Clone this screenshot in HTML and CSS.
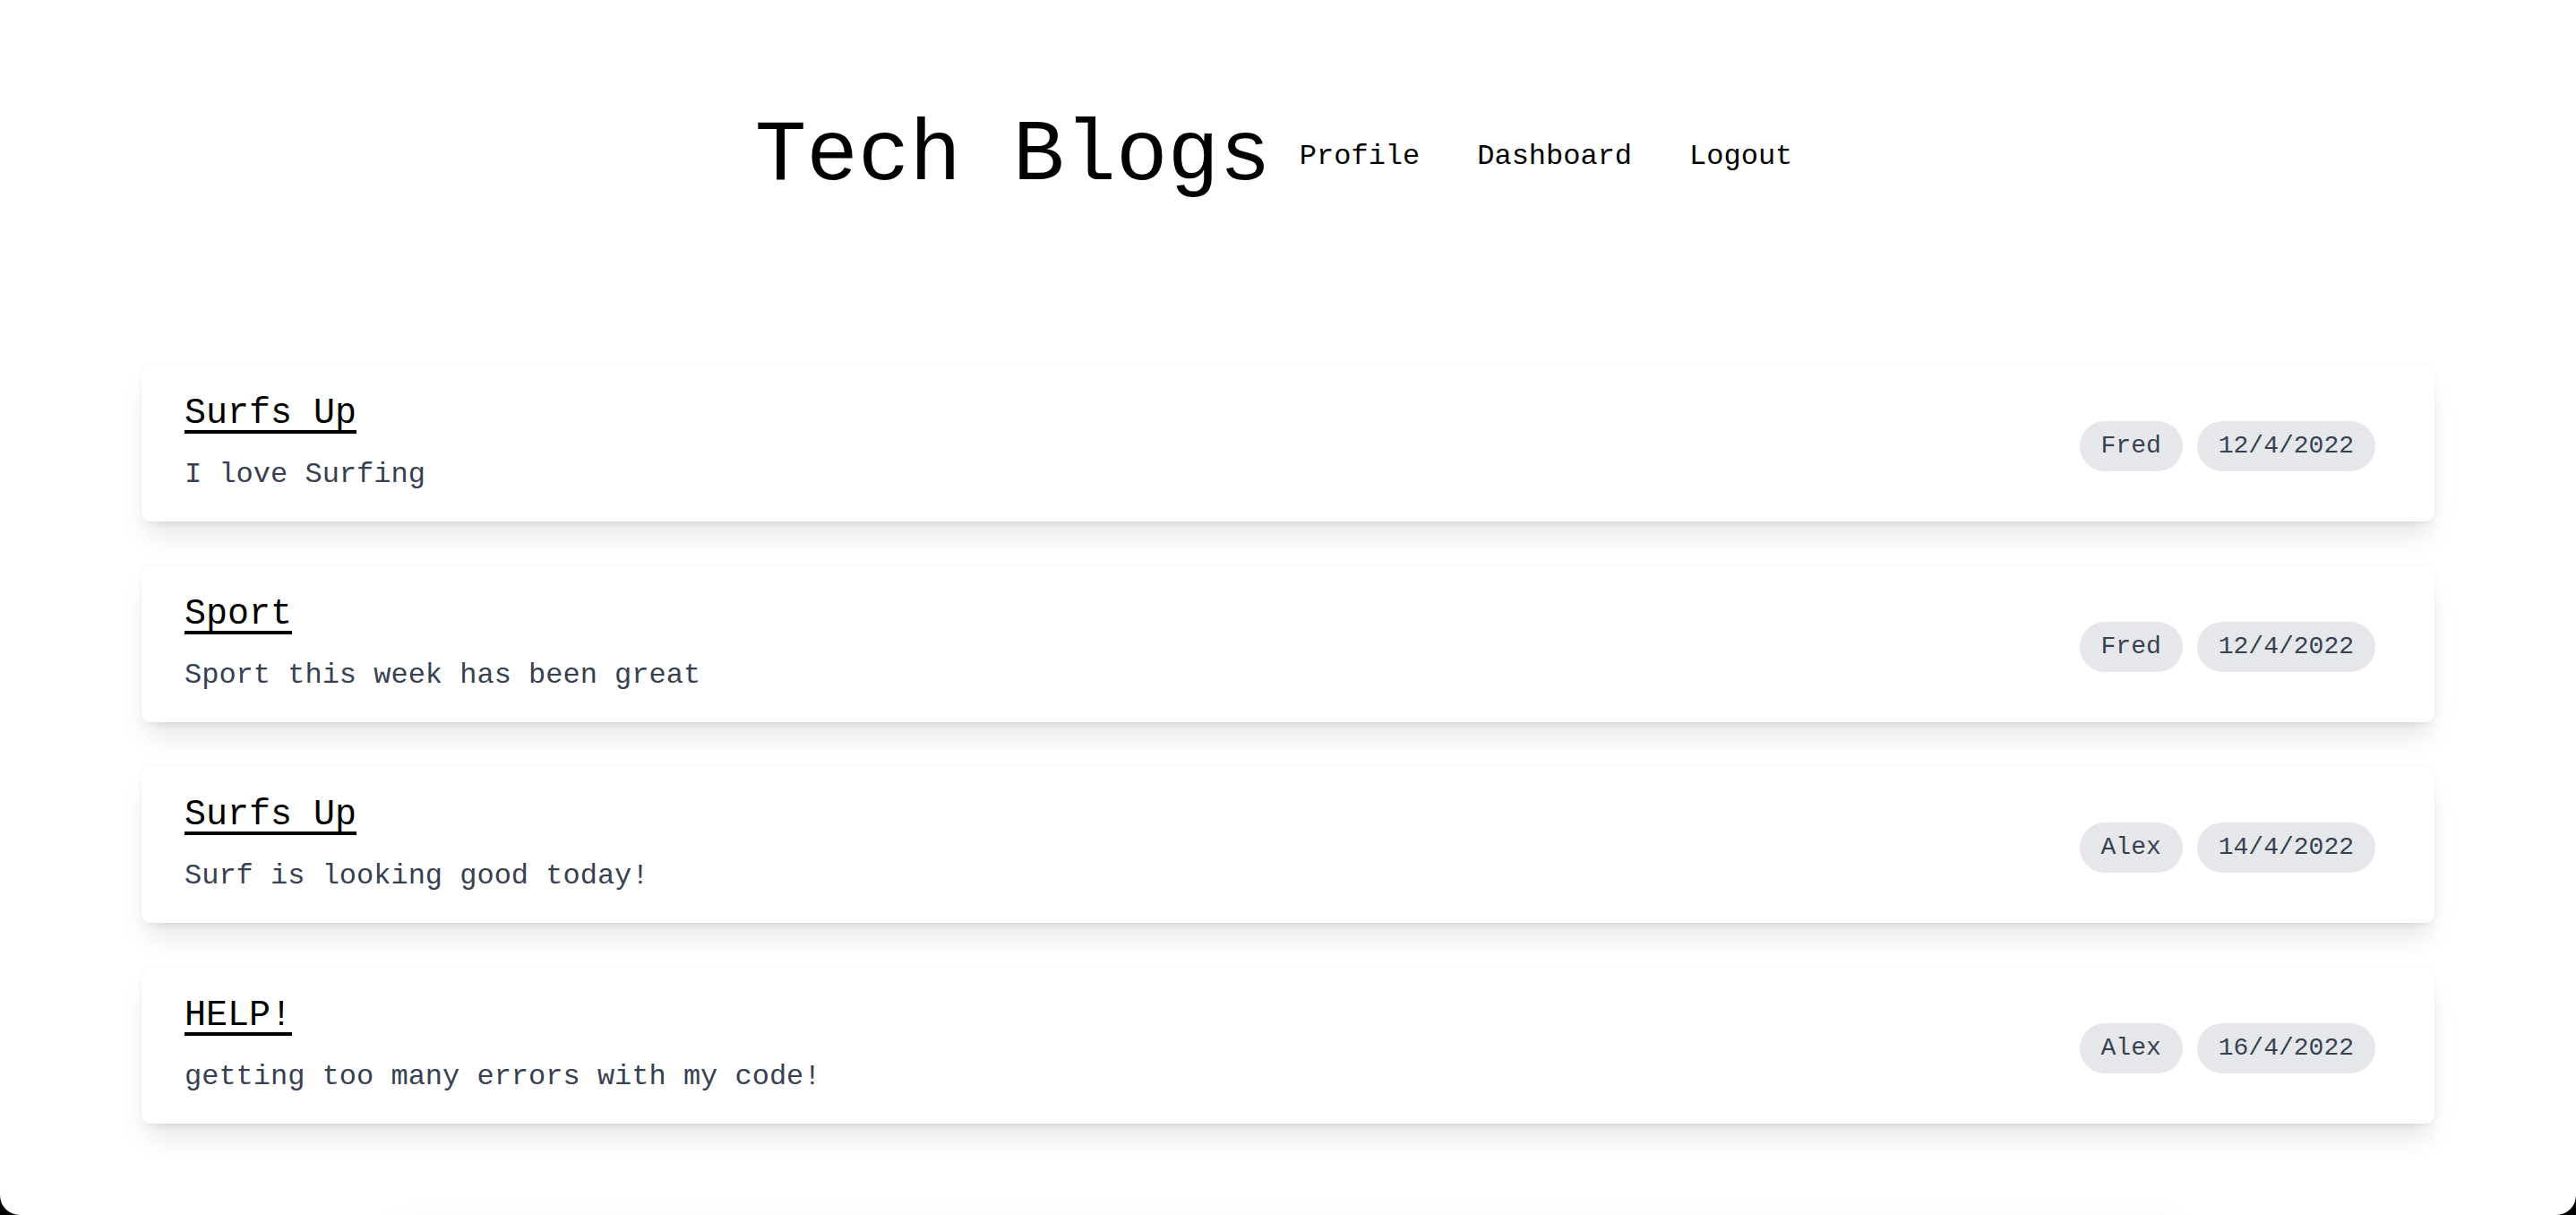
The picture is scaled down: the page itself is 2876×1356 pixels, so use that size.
FILE: index.html
```html
<!DOCTYPE html>
<html lang="en">
<head>
<meta charset="utf-8">
<title>Tech Blogs</title>
<link rel="stylesheet" href="styles.css">
</head>
<body>
<div class="page">
  <header class="site-header">
    <h1 class="brand">Tech Blogs</h1>
    <nav class="nav">
      <a class="nav-link" href="#">Profile</a>
      <a class="nav-link" href="#">Dashboard</a>
      <a class="nav-link" href="#">Logout</a>
    </nav>
  </header>
  <main class="posts">
    <article class="post">
      <div class="post-body">
        <a class="post-title" href="#">Surfs Up</a>
        <p class="post-text">I love Surfing</p>
      </div>
      <div class="post-meta">
        <span class="pill">Fred</span>
        <span class="pill">12/4/2022</span>
      </div>
    </article>
    <article class="post">
      <div class="post-body">
        <a class="post-title" href="#">Sport</a>
        <p class="post-text">Sport this week has been great</p>
      </div>
      <div class="post-meta">
        <span class="pill">Fred</span>
        <span class="pill">12/4/2022</span>
      </div>
    </article>
    <article class="post">
      <div class="post-body">
        <a class="post-title" href="#">Surfs Up</a>
        <p class="post-text">Surf is looking good today!</p>
      </div>
      <div class="post-meta">
        <span class="pill">Alex</span>
        <span class="pill">14/4/2022</span>
      </div>
    </article>
    <article class="post">
      <div class="post-body">
        <a class="post-title" href="#">HELP!</a>
        <p class="post-text">getting too many errors with my code!</p>
      </div>
      <div class="post-meta">
        <span class="pill">Alex</span>
        <span class="pill">16/4/2022</span>
      </div>
    </article>
  </main>
  <footer class="site-footer"></footer>
</div>
</body>
</html>
```
FILE: styles.css
```css
html {
  background: #000;
}
body {
  margin: 0;
  font-family: "Courier New", Courier, "Nimbus Mono PS", "FreeMono", "Liberation Mono", monospace;
  color: #000;
}
.page {
  height: 100vh;
  overflow: hidden;
  background: #fff;
  border-radius: 0 0 22px 22px;
}
.site-header {
  display: flex;
  justify-content: center;
  align-items: center;
  padding: 127px 0 0;
}
.brand {
  margin: 0;
  font-size: 96px;
  line-height: 96px;
  font-weight: 400;
}
.nav {
  display: flex;
}
.nav-link {
  margin: 0 32px;
  font-size: 32px;
  line-height: 48px;
  color: #000;
  text-decoration: none;
}
.posts {
  max-width: 2560px;
  margin: 0 auto;
  padding-top: 184px;
}
.post {
  display: flex;
  justify-content: space-between;
  align-items: center;
  padding: 27px 66px 28px 48px;
  margin-bottom: 49px;
  background: #fff;
  border-radius: 10px;
  box-shadow: 0 20px 30px -6px rgba(0, 0, 0, 0.1), 0 8px 12px -8px rgba(0, 0, 0, 0.1), 0 0 6px rgba(0, 0, 0, 0.04);
}
.post-title {
  font-size: 40px;
  line-height: 56px;
  color: #000;
  text-decoration: underline;
  text-decoration-thickness: 4px;
  text-underline-offset: 8px;
}
.post-text {
  margin: 16px 0 0;
  font-size: 32px;
  line-height: 48px;
  color: #374151;
}
.post-meta {
  display: flex;
  gap: 16px;
  margin-top: 7px;
}
.pill {
  padding: 8px 24px;
  font-size: 28px;
  line-height: 40px;
  color: #374151;
  background: #e5e7eb;
  border-radius: 9999px;
}
.site-footer {
  width: 2000px;
  height: 120px;
  margin: 122px auto 0;
  border-radius: 20px;
  box-shadow: 0 -6px 44px rgba(0, 0, 0, 0.06);
}
```
